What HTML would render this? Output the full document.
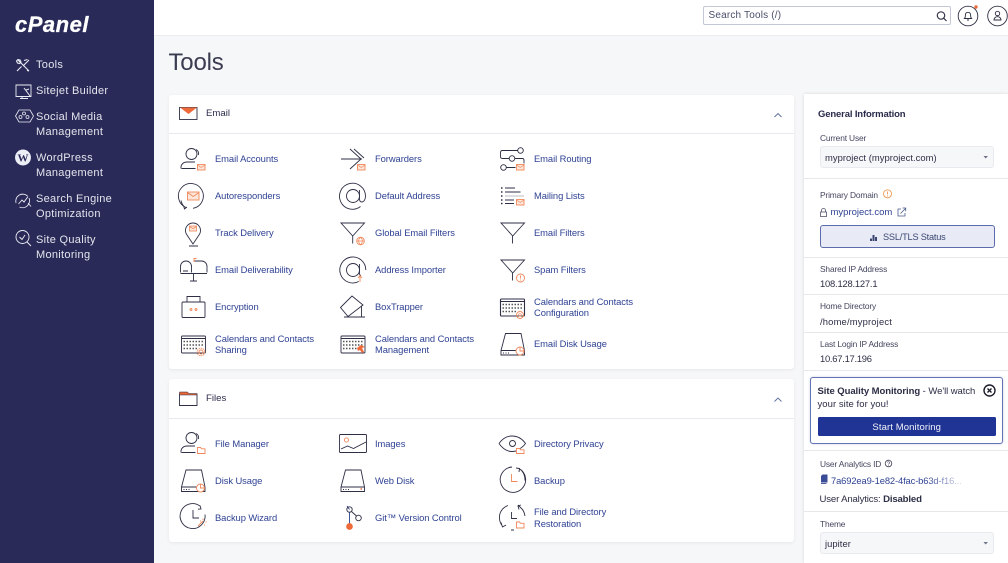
<!DOCTYPE html>
<html><head><meta charset="utf-8"><title>Tools - cPanel</title>
<style>
html,body{margin:0;padding:0}
body{width:1008px;height:563px;overflow:hidden;position:relative;background:#f6f7f8;font-family:"Liberation Sans",sans-serif}
#side{position:absolute;left:0;top:0;width:153.5px;height:563px;background:#292a57}
#top{position:absolute;left:154px;top:0;width:854px;height:35px;background:#fff;border-bottom:1px solid #ebedf0}
.card{position:absolute;left:169px;width:625px;background:#fff;border-radius:3px;box-shadow:0 1px 3px rgba(0,0,0,.07)}
.hr{position:absolute;left:0;width:625px;height:1px;background:#e6e9ee}
#panel{position:absolute;left:804px;top:94px;width:204px;height:469px;background:#fff;box-shadow:0 0 3px rgba(0,0,0,.13)}
.t{position:absolute;white-space:nowrap}
.s{color:#e4e5ee;font-size:11px;letter-spacing:.3px;line-height:15.3px;left:36px}
.l{color:#2f4293;font-size:9.4px;letter-spacing:-.07px;line-height:11.7px}
.h{color:#2b2d4c;font-size:9.6px;left:206px}
.g{color:#44465f;font-size:8.4px;letter-spacing:-.15px;left:820px}
.v{color:#2c2e45;font-size:9.4px;letter-spacing:.05px;left:820px}
.sel{position:absolute;left:819.5px;width:174px;background:#f6f7f9;border:1px solid #e8eaef;border-radius:3px;box-sizing:border-box}
.div{position:absolute;left:804px;width:204px;height:1px;background:#e7e8ea}
svg{position:absolute;left:0;top:0}
</style></head><body>
<div id="side"></div>
<div id="top"></div>
<div class="card" style="top:95px;height:274px"><div class="hr" style="top:38px"></div></div>
<div class="card" style="top:379px;height:163px"><div class="hr" style="top:39px"></div></div>
<div id="panel"></div>
<div class="div" style="top:178px"></div><div class="div" style="top:257px"></div><div class="div" style="top:294px"></div><div class="div" style="top:332px"></div><div class="div" style="top:370px"></div><div class="div" style="top:450px"></div><div class="div" style="top:511px"></div>

<div style="position:absolute;left:703px;top:6px;width:248px;height:19px;box-sizing:border-box;background:#fff;border:1px solid #c4c8d6;border-radius:2px"></div>
<div class="t" style="left:708.5px;top:10px;font-size:10px;letter-spacing:.18px;color:#4a4f6b">Search Tools (/)</div>

<div class="t" style="left:15px;top:12px;font-size:22px;font-weight:bold;font-style:italic;color:#fff;letter-spacing:.5px;-webkit-text-stroke:.3px #fff">cPanel</div>
<div class="t s" style="top:58px">Tools</div>
<div class="t s" style="top:84px">Sitejet Builder</div>
<div class="t s" style="top:109.5px">Social Media<br>Management</div>
<div class="t s" style="top:150.5px">WordPress<br>Management</div>
<div class="t s" style="top:191.5px">Search Engine<br>Optimization</div>
<div class="t s" style="top:232.5px">Site Quality<br>Monitoring</div>

<div class="t" style="left:168.5px;top:49px;font-size:24px;letter-spacing:-.2px;color:#3a3c52">Tools</div>
<div class="t h" style="top:107.5px">Email</div>
<div class="t h" style="top:392.5px">Files</div>

<div class="t l" style="left:215px;top:153px">Email Accounts</div>
<div class="t l" style="left:215px;top:190px">Autoresponders</div>
<div class="t l" style="left:215px;top:227px">Track Delivery</div>
<div class="t l" style="left:215px;top:264px">Email Deliverability</div>
<div class="t l" style="left:215px;top:301px">Encryption</div>
<div class="t l" style="left:215px;top:332.5px">Calendars and Contacts<br>Sharing</div>
<div class="t l" style="left:375px;top:153px">Forwarders</div>
<div class="t l" style="left:375px;top:190px">Default Address</div>
<div class="t l" style="left:375px;top:227px">Global Email Filters</div>
<div class="t l" style="left:375px;top:264px">Address Importer</div>
<div class="t l" style="left:375px;top:301px">BoxTrapper</div>
<div class="t l" style="left:375px;top:332.5px">Calendars and Contacts<br>Management</div>
<div class="t l" style="left:534px;top:153px">Email Routing</div>
<div class="t l" style="left:534px;top:190px">Mailing Lists</div>
<div class="t l" style="left:534px;top:227px">Email Filters</div>
<div class="t l" style="left:534px;top:264px">Spam Filters</div>
<div class="t l" style="left:534px;top:295.5px">Calendars and Contacts<br>Configuration</div>
<div class="t l" style="left:534px;top:338px">Email Disk Usage</div>
<div class="t l" style="left:215px;top:437.5px">File Manager</div>
<div class="t l" style="left:215px;top:474.5px">Disk Usage</div>
<div class="t l" style="left:215px;top:511.5px">Backup Wizard</div>
<div class="t l" style="left:375px;top:437.5px">Images</div>
<div class="t l" style="left:375px;top:474.5px">Web Disk</div>
<div class="t l" style="left:375px;top:511.5px">Git™ Version Control</div>
<div class="t l" style="left:534px;top:437.5px">Directory Privacy</div>
<div class="t l" style="left:534px;top:474.5px">Backup</div>
<div class="t l" style="left:534px;top:506px">File and Directory<br>Restoration</div>

<div class="t" style="left:818px;top:109px;font-size:9.5px;letter-spacing:-.15px;font-weight:bold;color:#292b4a">General Information</div>
<div class="t g" style="top:133px">Current User</div>
<div class="sel" style="top:146px;height:22px"></div>
<div class="t v" style="left:825px;top:151.5px">myproject (myproject.com)</div>
<div class="t g" style="top:189.5px">Primary Domain</div>
<div class="t" style="left:830.5px;top:207px;font-size:9.5px;color:#2f4293">myproject.com</div>
<div style="position:absolute;left:819.5px;top:224.5px;width:175px;height:23px;box-sizing:border-box;background:#e8ebf6;border:1px solid #5b6bab;border-radius:3px"></div>
<div class="t" style="left:883px;top:231.5px;font-size:9.2px;letter-spacing:-.2px;color:#3b4772">SSL/TLS Status</div>
<div class="t g" style="top:263.5px">Shared IP Address</div>
<div class="t v" style="top:277.5px;letter-spacing:-.2px">108.128.127.1</div>
<div class="t g" style="top:301px">Home Directory</div>
<div class="t v" style="top:315.5px;letter-spacing:.18px">/home/myproject</div>
<div class="t g" style="top:338.5px">Last Login IP Address</div>
<div class="t v" style="top:352.5px;letter-spacing:-.25px">10.67.17.196</div>

<div style="position:absolute;left:810px;top:377px;width:193px;height:66.5px;box-sizing:border-box;background:#fff;border:1px solid #6272b4;border-radius:3px;box-shadow:0 0 2px rgba(50,70,150,.25)"></div>
<div class="t" style="left:817.5px;top:385.5px;font-size:9.5px;letter-spacing:-.06px;color:#2b2d45"><b>Site Quality Monitoring</b> - We'll watch</div>
<div class="t" style="left:817.5px;top:399px;font-size:9.5px;letter-spacing:.05px;color:#2b2d45">your site for you!</div>
<div style="position:absolute;left:817.5px;top:417px;width:178.5px;height:19px;background:#1f3494;border-radius:1.5px"></div>
<div class="t" style="left:817.5px;top:421.5px;width:178.5px;text-align:center;font-size:9.5px;letter-spacing:.1px;color:#f2f3f8">Start Monitoring</div>

<div class="t g" style="top:459px">User Analytics ID</div>
<div class="t" style="left:831px;top:475px;font-size:9.4px;letter-spacing:-.13px;color:#2f4293">7a692ea9-1e82-4fac-b63d-f16...</div>
<div style="position:absolute;left:925px;top:473px;width:40px;height:15px;background:linear-gradient(90deg,rgba(255,255,255,0),rgba(255,255,255,.9))"></div>
<div class="t" style="left:819.5px;top:494px;font-size:9.6px;letter-spacing:-.16px;color:#2c2e45">User Analytics: <b>Disabled</b></div>
<div class="t g" style="top:518.5px">Theme</div>
<div class="sel" style="top:532px;height:22px"></div>
<div class="t v" style="left:825px;top:537.5px">jupiter</div>

<svg width="1008" height="563" viewBox="0 0 1008 563" fill="none" stroke="#2d2f45" stroke-width=".9">
<!-- top icons -->
<circle cx="941" cy="15.5" r="3.7" stroke="#33354a" stroke-width="1.2"/><path d="M943.7 18.2L946.5 21" stroke="#33354a" stroke-width="1.2"/>
<circle cx="968" cy="16" r="9.8" stroke="#2b2d42"/><path d="M964.5 18.5c1-1 .8-2 .9-3.5.1-1.7 1.1-2.700 2.600-2.700s2.500 1 2.600 2.700c.1 1.500-.1 2.500.9 3.500zM967 20h2" stroke="#2b2d42" stroke-width=".9"/>
<circle cx="976" cy="7" r="1.7" fill="#ee6a3a" stroke="none"/>
<circle cx="997.5" cy="16" r="9.8" stroke="#2b2d42"/><circle cx="997.5" cy="13.5" r="2.2" stroke="#2b2d42" stroke-width=".9"/><path d="M994 20c.3-2.400 1.700-3.300 3.500-3.300s3.200.9 3.500 3.300z" stroke="#2b2d42" stroke-width=".9"/>

<!-- sidebar icons -->
<g stroke="#eceef5" stroke-width="1.1">
<path d="M18 60l11 11M17 71l4.500-4.500M29 60l-6 6M24 60.500l3.500-1M18 59.500l2 .5 1 2-1.500 1.500-2-.5-1-2zM27 70.500l2 .5"/>
<path d="M16 85h15v11.500H16zM20 98.500h8M22 96.500v2" stroke-width=".9"/><path d="M24 88l6 8M26 90l3-1" stroke-width="1"/>
<path d="M15.500 116l3.500-6h11l3.500 6-3.500 6H19z" stroke-width=".8"/><circle cx="24" cy="113.500" r="1.500" stroke-width=".8"/><circle cx="20.500" cy="117" r="1.500" stroke-width=".8"/><circle cx="27.500" cy="117" r="1.500" stroke-width=".8"/>
<path d="M16 203a7 7 0 0 1 11.500-7M29 198a7 7 0 0 1-9.500 9" stroke-width=".9"/><path d="M18.500 204l3.500-4 2 2 4-5.500M28 203l3 3.500" stroke-width=".9"/>
<circle cx="22.500" cy="237" r="6.500" stroke-width=".9"/><path d="M19.500 237l2.500 2.500 3-4.500M27 242l4 4" stroke-width=".9"/>
</g>
<circle cx="23" cy="157.500" r="7.500" fill="#eceef5" stroke="#eceef5"/>
<text x="23" y="161.500" text-anchor="middle" font-family="Liberation Serif,serif" font-weight="bold" font-size="11" fill="#292a57" stroke="none">W</text>

<!-- header icons -->
<rect x="179.500" y="107.500" width="17.500" height="12"/><path d="M180 107.500h17l-8.500 6.500z" fill="#ee6a3a" stroke="none"/>
<path d="M179.500 394v11.500h17.500V394z"/><path d="M179.500 395v-3h8l1.500 1.500h8v1.500z" fill="#e4673a" stroke="#2d2f45" stroke-width=".5"/>
<path d="M774.500 117l3.500-3.500 3.500 3.500M774.500 401.500l3.500-3.500 3.500 3.500" stroke="#5d6d9e"/>

<!-- Email column 1 -->
<circle cx="191.500" cy="154" r="5.500"/><path d="M196 149.500c2 1 3 3 2.500 5.500M181 168.500c-.5-4 2.500-6.500 6-6.500h8M181.500 168.500h14"/>
<g stroke="#f0885a"><rect x="197.500" y="164.500" width="7.500" height="5.500" fill="#fde6da"/><path d="M197.500 165l3.700 2.500 3.800-2.500" stroke-width=".7"/></g>
<path d="M186 207.500a12.500 12.500 0 1 1 7 .8M181 200.500a12.500 12.500 0 0 0 3 6M183.500 205.500l1 3.500 2.500-2"/>
<g stroke="#f0885a"><rect x="187.500" y="192" width="11.500" height="8" fill="#fde6da"/><path d="M187.500 192.500l5.700 4 5.800-4"/></g>
<path d="M193 244l-6-9a7.500 7.500 0 1 1 12 0zM189 246h9" stroke-width=".9"/>
<g stroke="#f0885a" stroke-width=".8"><rect x="189.500" y="226" width="7" height="5" fill="#fde6da"/><path d="M189.500 226.500l3.500 2.200 3.500-2.200"/></g>
<path d="M180.500 272.500v-6a5.500 5.500 0 0 1 11 0v6M194.500 261h7a5.500 5.500 0 0 1 5.500 5.500v6M180.500 273.500h26.500M193.500 273.500v7M190 281h7M183 271h5"/>
<path d="M194 262v-3.500h2.500" stroke="#f0885a"/>
<rect x="182" y="302" width="23" height="15.500" rx="1"/><path d="M187 302v-5.500h13v5.500"/>
<circle cx="191" cy="309.500" r="1" stroke="#f0885a"/><circle cx="196" cy="309.500" r="1" stroke="#f0885a"/>

<!-- calendars -->
<g><rect x="181.500" y="336" width="24" height="17" rx="1"/><path d="M181.500 338.500h24"/>
<path d="M183.500 341.500h20M183.500 345h20M183.500 348.500h14" stroke-width="1.500" stroke-dasharray="1.500 1.500" stroke="#555"/></g>
<circle cx="201" cy="352" r="2" stroke="#f0885a"/><circle cx="201" cy="352" r="3.800" stroke="#f0885a" stroke-dasharray="1.500 .7"/>

<!-- column 2 -->
<path d="M341 159h21M350 149l11 10-11 10M354 149l10 9"/>
<g stroke="#f0885a"><rect x="357.500" y="164.500" width="7.500" height="5.500" fill="#fde6da"/><path d="M357.500 165l3.700 2.500 3.800-2.500" stroke-width=".7"/></g>
<circle cx="353" cy="196" r="6.500"/><path d="M359.500 190v9c0 2 1 3 2.500 3s3.500-2 3.500-6a13 13 0 1 0-5 10.500"/>
<path d="M341 223h23.500l-11.800 13zM352.700 236v7.500"/>
<circle cx="360.500" cy="241" r="3.800" stroke="#f0885a"/><path d="M356.700 241h7.600M360.500 237.200c-2.500 2.500-2.500 5 0 7.600 2.500-2.600 2.500-5.100 0-7.600" stroke="#f0885a" stroke-width=".7"/>
<circle cx="353" cy="270" r="6.500"/><path d="M359.500 264v9c0 1.500.5 2.500 1.500 2.500M365.800 270a13 13 0 1 0-7 11.500"/>
<path d="M360 282v-6M358 278l2-2.500 2 2.500" stroke="#f0885a"/>
<path d="M340.500 307.500l11.500-11.500 11 9-15 11.500zM344 317h21M361.500 305.500V317"/>
<g transform="translate(159.500 0)"><rect x="181.500" y="336" width="24" height="17" rx="1"/><path d="M181.500 338.500h24"/>
<path d="M183.500 341.500h20M183.500 345h20M183.500 348.500h14" stroke-width="1.500" stroke-dasharray="1.500 1.500" stroke="#555"/></g>
<path d="M357 348l4-3 4 2-3 1 2 4-2 1-2-3-2 1z" fill="#ee6a3a" stroke="none"/>

<!-- column 3 -->
<circle cx="520.500" cy="150.500" r="2.800"/><circle cx="512" cy="158.500" r="2.800"/><circle cx="503.500" cy="167.500" r="2.800"/>
<path d="M517.500 150.500h-15c-1.500 0-2 .7-2 2v4c0 1.300.5 2 2 2h6.500M515 158.500h7.500c1 0 1.500.7 1.500 2v3M506.500 167.500h9"/>
<g stroke="#f0885a"><rect x="516.500" y="164.500" width="7.500" height="5.500" fill="#fde6da"/><path d="M516.500 165l3.700 2.500 3.800-2.500" stroke-width=".7"/></g>
<path d="M501 188h1.500M501 192h1.500M501 196h1.500M501 200h1.500M501 203.500h1.500" stroke-width="1.500"/><path d="M505 188h10M505 192h15.500M505 200h9M505 203.500h9"/><path d="M505 196h19" stroke="#bcbdc5"/>
<g stroke="#f0885a"><rect x="516.500" y="199.500" width="7.500" height="5.500" fill="#fde6da"/><path d="M516.500 200l3.700 2.500 3.800-2.500" stroke-width=".7"/></g>
<path d="M501 223h23.500l-11.800 13zM512.500 236v7.500"/>
<path d="M501 260h23.500l-11.800 13zM512.500 273v7.500"/>
<circle cx="520.500" cy="278" r="4" stroke="#f0885a"/><path d="M520.500 275.500v3M520.500 279.500v1" stroke="#f0885a"/>
<g transform="translate(319 -37)"><rect x="181.500" y="336" width="24" height="17" rx="1" stroke-width="1.100"/><path d="M181.500 338.500h24"/>
<path d="M183.500 341.500h20M183.500 345h20M183.500 348.500h14" stroke-width="1.500" stroke-dasharray="1.500 1.500" stroke="#555"/></g>
<circle cx="520" cy="315" r="3.500" stroke="#f0885a"/><circle cx="520" cy="315" r="1.300" stroke="#f0885a" stroke-width=".7"/>
<path d="M505.500 333.500h15.500l3.500 17v4.500h-23.500v-4.500zM501 350.500h23.500M503 353h1M505.500 353h1M508 353h1" stroke-width=".9"/>
<circle cx="520" cy="351" r="4" fill="#fff" stroke="#f0885a"/><path d="M520 347v4h4" stroke="#f0885a"/>

<!-- files -->
<circle cx="191.500" cy="438" r="5.500"/><path d="M196 433.500c2 1 3 3 2.500 5.500M181 452.500c-.5-4 2.500-6.500 6-6.500h8M181.500 452.500h14"/>
<path d="M197.500 447.500h3l1 1.300h3.500v4.700h-7.500z" stroke="#f0885a"/>
<rect x="339.500" y="434.500" width="27" height="18" rx="1"/><circle cx="346.500" cy="440" r="2.100" stroke="#f0885a"/><path d="M341 449l6.500-3 6 2.500 12.500-6.500"/>
<path d="M186 470h15.500l3.500 17v4.500h-23.500V487zM181.500 487h23.500M183.500 489.500h1M186 489.500h1M188.500 489.500h1" stroke-width=".9"/>
<circle cx="200.500" cy="488" r="4" fill="#fff" stroke="#f0885a"/><path d="M200.500 484v4h4" stroke="#f0885a"/>
<path d="M345.500 470H361l3.500 17v4.500H341V487zM341 487h23.500M343 489.500h1M345.500 489.500h1M348 489.500h1" stroke-width=".9"/>
<path d="M360.500 489h1.500" stroke="#ee6a3a" stroke-width="1.500"/>
<path d="M200 506a12.500 12.500 0 1 0 5 8.500M193 510v8h6M200 505.500l1 3.500-3 .2"/>
<path d="M198 526l5-5M200 521h1M204 525h1M203 518.500v1.500M205.500 522h1" stroke="#f0885a"/>
<path d="M347 506l2.500 3.500M349.500 512v11.500" stroke="#2f4293"/><circle cx="349.500" cy="509.500" r="2.700"/><circle cx="358.500" cy="518" r="2.800"/><path d="M351.500 511.500l5 4.500"/><circle cx="349.500" cy="526.500" r="2.900" fill="#ee6a3a" stroke="#ee6a3a"/>
<path d="M499 443.500c3.500-5 8-7.500 13-7.500s10 2.500 13.500 7.500c-1.500 2-3.500 4-5.500 5M516 451c-1.500.3-3 .5-4 .5-5 0-9.500-3-13-8"/><circle cx="512.500" cy="443.500" r="3"/>
<path d="M516.500 448.500h3l1 1.300h3.500v3.700h-7.500z" stroke="#f0885a"/>
<path d="M519 468.500a12.700 12.700 0 1 1-7-1.500M516 468l3.500.5-.5 3.500M519 468.500c4 2.500 6 7 6 12"/>
<path d="M511.500 474v7.500h6" stroke="#f0885a"/>
<path d="M508 505.500a12.500 12.500 0 0 0-8.500 13c.2 3 1 5 2.500 7M501 522.500l1.500 4.500 3.500-2M518 505l3 3c2.500 2 3.500 5 4 8M517.500 506l3.500-1M518 506l1 3.500M511 530h3"/>
<path d="M511.500 512v6.500h5.500" stroke="#33354a"/>
<path d="M516.500 522h3l1 1.300h3.500v4.700h-7.500z" stroke="#f0885a"/>

<!-- panel icons -->
<path d="M983.500 156l2.200 2.500 2.200-2.500zM983.500 542l2.200 2.500 2.200-2.500z" fill="#6b7085" stroke="none"/>
<circle cx="887.500" cy="193.800" r="4" stroke="#ef9a55"/><path d="M887.500 191.500v3M887.500 195.500v1" stroke="#ef9a55"/>
<rect x="820.500" y="212" width="6" height="4.500" stroke="#55576a" stroke-width=".8"/><path d="M821.500 212v-1.500a2 2 0 0 1 4 0v1.500" stroke="#55576a" stroke-width=".8"/>
<path d="M901 209h-3v7h7v-3M900.500 213.500l5-5M902.500 208h3.200v3.200" stroke="#4a5a8c" stroke-width=".8"/>
<path d="M871 241v-2.500M873.500 241v-6M876 241v-4" stroke="#3b4772" stroke-width="2"/>
<circle cx="888.500" cy="463.500" r="3.300" stroke="#3c3e55" stroke-width=".8"/><path d="M887.300 462.600c.3-1.300 2.400-1 2.300.2 0 .8-1.100.9-1.100 1.700M888.500 465.300v.6" stroke="#3c3e55" stroke-width=".6"/>
<path d="M822.500 474.500h5v8h-6.500v-6.500z" fill="#3a4c96" stroke="none"/><path d="M821 483.500h5.500" stroke="#3a4c96"/>
<circle cx="989.500" cy="390.500" r="5.500" stroke="#1d1e2c" stroke-width="1.400"/><path d="M987.500 388.500l4 4M991.500 388.500l-4 4" stroke="#1d1e2c" stroke-width="1.400"/>
</svg>
</body></html>
